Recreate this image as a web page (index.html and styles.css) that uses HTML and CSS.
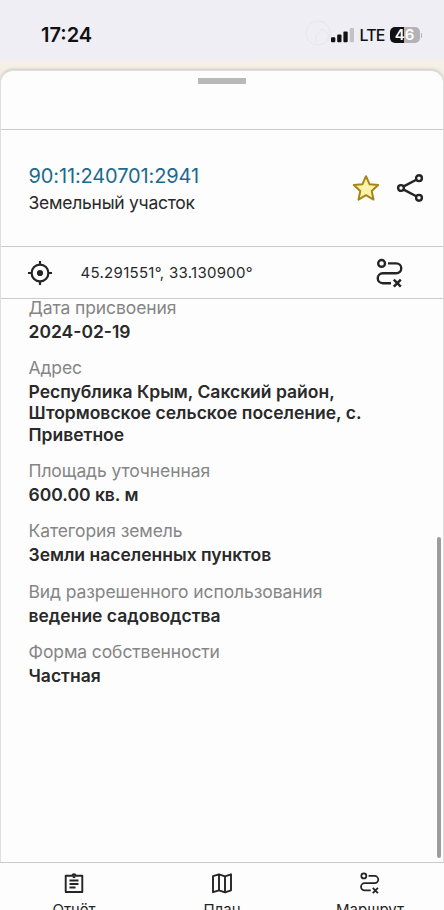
FILE: index.html
```html
<!DOCTYPE html>
<html lang="ru">
<head>
<meta charset="utf-8">
<meta name="viewport" content="width=device-width, initial-scale=1">
<title>Земельный участок</title>
<link rel="stylesheet" href="styles.css">
</head>
<body>
<svg width="0" height="0" class="sprite" aria-hidden="true">
  <symbol id="route" viewBox="0 0 28 30" fill="none" stroke="currentColor">
    <circle cx="5.6" cy="5.400" r="3.4" stroke-width="2.4"/>
    <path d="M12 5.400H20.300a4.950 4.950 0 0 1 0 9.900H6.700a4.950 4.950 0 0 0 0 9.900H15" stroke-width="2.4"/>
    <path d="M17.800 21.700l7 7M24.800 21.700l-7 7" stroke-width="2.5"/>
  </symbol>
</svg>
<div class="phone">
  <header class="status">
    <span class="clock">17:24</span>
    <div class="indicators">
      <svg class="watermark" viewBox="0 0 26 32" fill="none" stroke="#e7e6eb"><circle cx="13" cy="15" r="12"/><path d="M11 25V17l6-6 6 5v7"/></svg>
      <svg class="signal" width="24" height="15" viewBox="0 0 24 15">
        <rect x="0" y="9.2" width="4.3" height="5" rx="1"/>
        <rect x="6.2" y="6.5" width="4.3" height="7.7" rx="1"/>
        <rect x="12.4" y="3.4" width="4.3" height="10.8" rx="1"/>
        <rect x="18.7" y="0" width="4.3" height="14.2" rx="1" fill="#c3c3c7"/>
      </svg>
      <span class="network">LTE</span>
      <span class="battery">46</span>
      <span class="battery-tip"></span>
    </div>
  </header>
  <main class="sheet">
    <div class="handle-row"><div class="handle"></div></div>
    <section class="title-row">
      <div class="title-text">
        <h1>90:11:240701:2941</h1>
        <p>Земельный участок</p>
      </div>
      <svg class="star" width="28" height="28" viewBox="0 0 28 28"><path d="M14 2.2l3.5 8 8.700.8-6.500 5.900 1.800 8.700L14 21.200 6.500 25.600l1.800-8.700-6.500-5.900 8.700-.8z" fill="#fdf3a8" stroke="#a58419" stroke-width="2" stroke-linejoin="round"/></svg>
      <svg class="share" width="28" height="30" viewBox="0 0 28 30" fill="none" stroke="#242424" stroke-width="2.4"><path d="M7.7 13.4L20.300 6.700M7.7 16.6l12.6 6.700"/><circle cx="5" cy="15" r="2.900"/><circle cx="23" cy="5.200" r="2.900"/><circle cx="23" cy="24.800" r="2.900"/></svg>
    </section>
    <section class="coords-row">
      <svg width="24" height="24" viewBox="0 0 24 24" fill="none" stroke="#242424" stroke-width="2.2"><circle cx="12" cy="12" r="8.4"/><circle cx="12" cy="12" r="3.1" fill="#242424" stroke="none"/><path d="M12 0v4M12 20v4M0 12h4M20 12h4"/></svg>
      <span class="coords">45.291551°, 33.130900°</span>
      <svg class="route" width="28" height="30"><use href="#route"/></svg>
    </section>
    <dl class="details">
      <div><dt>Дата присвоения</dt><dd>2024-02-19</dd></div>
      <div><dt>Адрес</dt><dd>Республика Крым, Сакский район,<br>Штормовское сельское поселение, с.<br>Приветное</dd></div>
      <div><dt>Площадь уточненная</dt><dd>600.00 кв. м</dd></div>
      <div><dt>Категория земель</dt><dd>Земли населенных пунктов</dd></div>
      <div><dt>Вид разрешенного использования</dt><dd>ведение садоводства</dd></div>
      <div><dt>Форма собственности</dt><dd>Частная</dd></div>
      <span class="scrollbar"></span>
    </dl>
  </main>
  <nav class="tabs">
    <a><svg width="22" height="22" viewBox="0 0 22 22" fill="none" stroke="#242424" stroke-width="1.9" stroke-linejoin="round"><path d="M8 3.700H2.700v16.300h16.600V3.700H14M7.500 3.700h1.600a2 2 0 0 1 3.800 0h1.600M6.500 8.500h9M6.500 12h9M6.500 15.500h6"/><circle cx="11" cy="4.600" r=".7"/></svg><span>Отчёт</span></a>
    <a><svg width="22" height="22" viewBox="0 0 22 22" fill="none" stroke="#242424" stroke-width="1.9" stroke-linejoin="round"><path d="M2 4.200L8 2.300l6 2 6-2V18.300l-6 2-6-2-6 1.900zM8 2.500V18.300M14 4.500V20"/></svg><span>План</span></a>
    <a><svg width="20" height="22" viewBox="1 0 26 30"><use href="#route" width="28" height="30"/></svg><span>Маршрут</span></a>
  </nav>
</div>
</body>
</html>
```
FILE: styles.css
```css
* { box-sizing: border-box; }
body { margin: 0; font-family: Inter, "Liberation Sans", sans-serif; color: #292929; }
.sprite { display: none; }
.phone { width: 444px; height: 910px; overflow: hidden; display: flex; flex-direction: column; background: linear-gradient(#efeef4 58px, #f4f0e6 63px, #f4efe1 90px); }
.status { height: 70px; flex: none; display: flex; justify-content: space-between; align-items: flex-start; padding: 22px 22px 0 41px; }
.clock { font-size: 20px; line-height: 26px; font-weight: 600; color: #111; }
.indicators { position: relative; display: flex; align-items: center; height: 26px; }
.watermark { position: absolute; left: -26px; top: -4px; width: 26px; height: 32px; }
.signal { margin-right: 5px; fill: #111; }
.network { width: 24px; margin-right: 6px; font-size: 16px; letter-spacing: -0.9px; font-weight: 500; color: #111; white-space: nowrap; }
.battery { width: 30px; height: 16px; border-radius: 5px; background: linear-gradient(90deg, #111 46%, #b3b3b7 46%); color: #fff; font-size: 15px; line-height: 16px; font-weight: 600; text-align: center; }
.battery-tip { width: 1.5px; height: 5px; margin-left: 1px; border-radius: 0 2px 2px 0; background: #b3b3b7; }
.sheet { flex: none; height: 792px; display: flex; flex-direction: column; background: #fdfdfd; border: 1px solid #dedede; border-bottom: 0; border-radius: 13px 13px 0 0; box-shadow: 0 -1px 3px rgba(0,0,0,.16); }
.handle-row { height: 59px; flex: none; border-bottom: 1px solid #cbcbcb; padding-top: 7px; }
.handle { width: 48px; height: 6px; margin: 0 auto; background: #b9b9b9; }
.title-row { height: 117px; flex: none; display: flex; align-items: center; padding: 0 19px 0 27.500px; border-bottom: 1px solid #cbcbcb; }
.title-text { flex: 1; padding-top: 2px; }
h1 { margin: 0; font-size: 20px; letter-spacing: -0.130px; line-height: 27px; font-weight: 400; color: #1c6a8c; white-space: nowrap; }
p { margin: 0; font-size: 17.500px; letter-spacing: -0.250px; line-height: 26px; white-space: nowrap; }
.star { margin-right: 16px; }
.coords-row { height: 52px; flex: none; display: flex; align-items: center; padding: 0 39px 0 27px; border-bottom: 1px solid #cbcbcb; }
.coords { margin-left: 28.500px; font-size: 15px; letter-spacing: 0.290px; white-space: nowrap; }
.route { margin-left: auto; color: #242424; }
.details { position: relative; flex: 1; margin: -2px 0 0; padding: 0 27.500px; font-size: 17.500px; line-height: 21.300px; white-space: nowrap; }
.details div { margin-bottom: 15.200px; }
dt { color: #858585; letter-spacing: -0.100px; margin-bottom: 2.500px; }
dd { margin: 0; font-weight: 600; }
.scrollbar { position: absolute; right: 2px; top: 240px; width: 4px; height: 321px; border-radius: 2px; background: #9d9d9d; }
.tabs { height: 48px; flex: none; display: grid; grid-template-columns: repeat(3, 1fr); border-top: 1px solid #c9c9c9; background: #fdfdfd; }
.tabs a { display: flex; flex-direction: column; align-items: center; padding-top: 9px; color: #242424; }
.tabs span { margin-top: 5.500px; font-size: 15px; line-height: 20px; }
```
